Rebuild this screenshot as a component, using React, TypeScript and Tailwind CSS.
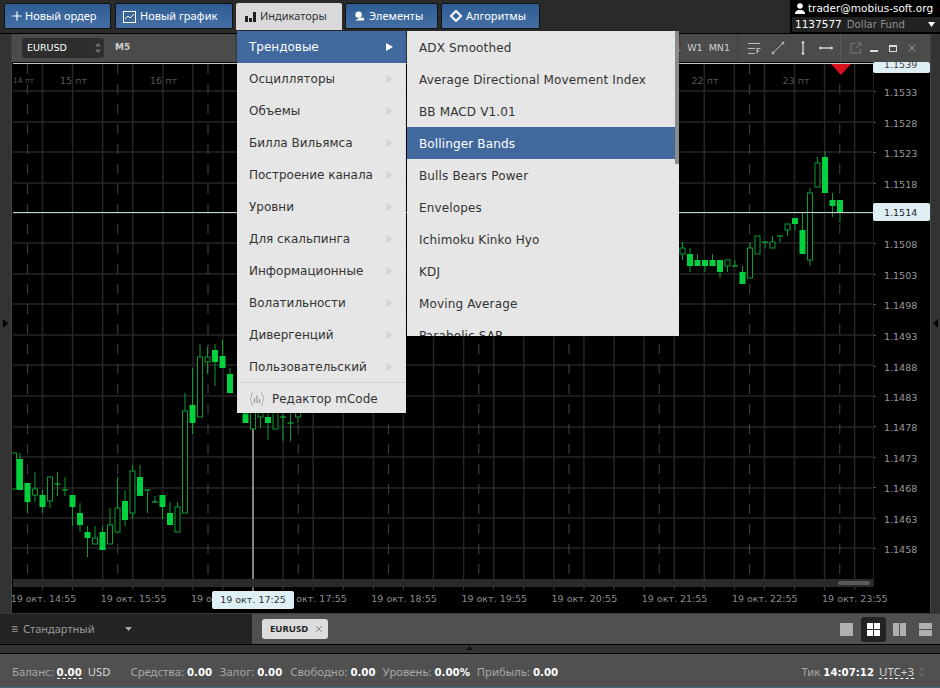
import React from "react";
import { Plus, X } from "lucide-react";

type Candle = [number, number, number, number, number, "f" | "h" | "d"];

// x, high, body top, body bottom, low, kind
const candles: Candle[] = [
    [14, 453, 453, 489, 489, "h"],
    [20, 453, 459, 490, 490, "f"],
    [27.5, 483, 483, 502, 513, "f"],
    [35, 472, 489, 495, 502, "h"],
    [42.5, 490, 495, 507, 513, "f"],
    [50, 477, 477, 501, 508, "h"],
    [57.5, 472, 484, 484, 496, "d"],
    [65, 477, 490, 490, 496, "d"],
    [72.5, 495, 495, 507, 526, "f"],
    [80, 503, 513, 525, 532, "f"],
    [87.5, 526, 532, 538, 557, "f"],
    [95, 526, 538, 544, 544, "h"],
    [102.5, 526, 532, 550, 550, "f"],
    [110, 508, 525, 544, 544, "h"],
    [117.5, 477, 508, 532, 532, "h"],
    [125, 490, 501, 520, 526, "f"],
    [132.5, 465, 471, 513, 519, "h"],
    [140, 465, 477, 496, 496, "f"],
    [147.5, 490, 490, 490, 513, "d"],
    [155, 496, 502, 502, 502, "d"],
    [162.5, 495, 495, 507, 519, "f"],
    [170, 502, 513, 525, 525, "f"],
    [177.5, 502, 507, 532, 532, "h"],
    [185, 393, 411, 513, 513, "h"],
    [192.5, 368, 405, 423, 434, "f"],
    [200, 344, 357, 417, 417, "h"],
    [207.5, 347, 357, 362, 374, "h"],
    [215, 344, 350, 362, 386, "f"],
    [222.5, 340, 356, 368, 368, "f"],
    [230, 368, 374, 393, 393, "f"],
    [245.5, 405, 405, 423, 423, "f"],
    [253, 405, 405, 429, 429, "h"],
    [260.5, 405, 405, 417, 428, "h"],
    [268, 405, 417, 423, 440, "f"],
    [275.5, 405, 405, 429, 429, "h"],
    [283, 405, 417, 417, 441, "d"],
    [290.5, 405, 423, 423, 441, "d"],
    [298, 405, 405, 417, 423, "h"],
    [682.5, 242, 248, 254, 260, "h"],
    [690, 248, 254, 266, 272, "f"],
    [697.5, 254, 260, 266, 266, "f"],
    [705, 260, 260, 266, 272, "f"],
    [712.5, 254, 260, 266, 266, "f"],
    [720, 260, 260, 272, 278, "f"],
    [727.5, 260, 260, 266, 272, "h"],
    [735, 260, 266, 266, 266, "d"],
    [742.5, 266, 272, 284, 284, "f"],
    [750, 242, 248, 278, 278, "h"],
    [757.5, 236, 236, 254, 254, "h"],
    [765, 242, 242, 242, 248, "d"],
    [772.5, 236, 242, 248, 248, "h"],
    [780, 236, 236, 236, 242, "d"],
    [787.5, 224, 224, 230, 236, "h"],
    [795, 218, 218, 224, 230, "f"],
    [802.5, 212, 230, 254, 254, "f"],
    [810, 188, 193, 260, 266, "h"],
    [817.5, 157, 163, 187, 187, "h"],
    [825, 151, 157, 193, 193, "f"],
    [832.5, 193, 200, 206, 217, "f"],
    [840, 200, 200, 212, 223, "f"],
];

const prices = [
    ["1.1533", 92],
    ["1.1528", 123],
    ["1.1523", 153],
    ["1.1518", 184],
    ["1.1508", 244],
    ["1.1503", 275],
    ["1.1498", 305],
    ["1.1493", 336],
    ["1.1488", 367],
    ["1.1483", 397],
    ["1.1478", 427],
    ["1.1473", 458],
    ["1.1468", 488],
    ["1.1463", 519],
    ["1.1458", 549],
] as const;

const times = ["14:55", "15:55", "16:55", "17:55", "18:55", "19:55", "20:55", "21:55", "22:55", "23:55"];
const solid = Array.from({ length: 28 }, (_, i) => 42.5 + i * 30.08);
const dashed = Array.from({ length: 10 }, (_, i) => 27.5 + i * 90.25);

const mainMenu = [
    "Трендовые",
    "Осцилляторы",
    "Объемы",
    "Билла Вильямса",
    "Построение канала",
    "Уровни",
    "Для скальпинга",
    "Информационные",
    "Волатильности",
    "Дивергенций",
    "Пользовательский",
];

const subMenu = [
    "ADX Smoothed",
    "Average Directional Movement Index",
    "BB MACD V1.01",
    "Bollinger Bands",
    "Bulls Bears Power",
    "Envelopes",
    "Ichimoku Kinko Hyo",
    "KDJ",
    "Moving Average",
    "Parabolic SAR",
];

const BlueBtn = ({ className, icon, text }: { className: string; icon: React.ReactNode; text: string }) => (
    <div
        className={`flex items-center h-[26px] border border-[#111] rounded-[2px] bg-gradient-to-b from-[#2e5c92] to-[#446fa5] text-white text-[11px] ${className}`}
    >
        {icon}
        <span>{text}</span>
    </div>
);

const Chart = () => (
    <svg className="block w-full h-full" viewBox="12 62 918 551" fontFamily="'DejaVu Sans', sans-serif">
        <rect x="12" y="62" width="918" height="551" fill="#000" />
        <line x1="13" y1="63.5" x2="873" y2="63.5" stroke="#c9c9c9" />
        {[91, 122, 152, 183, 213, 243, 274, 304, 335, 365, 396, 427, 457, 488, 518, 548].map((y) => (
            <line key={y} x1="13" y1={y} x2="873" y2={y} stroke="#262626" strokeWidth="1.5" />
        ))}
        {solid.map((x) => (
            <line key={x} x1={x} y1="64" x2={x} y2="579" stroke="#262626" strokeWidth="1.5" />
        ))}
        {dashed.map((x) => (
            <line key={x} x1={x} y1="64" x2={x} y2="579" stroke="#3a3a3a" strokeWidth="1.2" strokeDasharray="10 10" />
        ))}
        <text x="13" y="83" fontSize="7.5" fill="#555">
            14 пт
        </text>
        {[
            ["15 пт", 73.5],
            ["16 пт", 163.5],
            ["22 пт", 705],
            ["23 пт", 796],
        ].map(([t, x]) => (
            <text key={t} x={x} y="84" textAnchor="middle" fontSize="9.5" fill="#555">
                {t}
            </text>
        ))}

        {/* crosshair */}
        <line x1="253" y1="413" x2="253" y2="592" stroke="#9aa0a3" strokeWidth="1.6" />

        {candles.map(([x, hi, top, bottom, lo, kind]) => (
            <g key={x}>
                <line x1={x} y1={hi} x2={x} y2={lo} stroke="#0a9c35" />
                {kind === "f" && <rect x={x - 3} y={top} width="6" height={bottom - top} fill="#00d23f" />}
                {kind === "h" && (
                    <rect x={x - 2.5} y={top} width="5" height={bottom - top} fill="#000" stroke="#0a9c35" />
                )}
                {kind === "d" && <line x1={x - 3} y1={top} x2={x + 3} y2={top} stroke="#0fb53d" strokeWidth="1.2" />}
            </g>
        ))}

        <line x1="13" y1="212.5" x2="873" y2="212.5" stroke="#bcd8dd" />
        <polygon points="831,64 851,64 841,75" fill="#d8111c" />

        {/* price axis */}
        {prices.map(([p, y]) => (
            <g key={p}>
                <line x1="873" y1={y - 0.5} x2="876" y2={y - 0.5} stroke="#555" />
                <text x="884" y={y + 3.5} fontSize="9.5" fill="#9a9a9a">
                    {p}
                </text>
            </g>
        ))}
        <line x1="873.5" y1="64" x2="873.5" y2="587" stroke="#222" />

        {/* scrollbar */}
        <rect x="13" y="579" width="860" height="8" fill="#2a2a2a" />
        <rect x="838" y="581" width="32" height="4" rx="2" fill="#5a5a5a" />

        {/* time axis */}
        {solid.map((x) => (
            <line key={x} x1={x} y1="587" x2={x} y2="590" stroke="#444" />
        ))}
        {times.map((t, i) => (
            <text key={t} x={43.5 + i * 90.15} y="602" textAnchor="middle" fontSize="9.5" fill="#8c8c8c">
                19 окт. {t}
            </text>
        ))}

        {/* tags over the axes */}
        <rect x="873" y="62" width="57" height="11" rx="2" fill="#dff0f5" />
        <text x="884" y="68" fontSize="9.5" fill="#444">
            1.1539
        </text>
        <rect x="873" y="203" width="57" height="18" rx="2" fill="#dff0f5" />
        <text x="884" y="215.5" fontSize="9.5" fill="#222">
            1.1514
        </text>
        <rect x="212" y="591" width="82" height="18" rx="2" fill="#dff0f5" />
        <text x="253" y="603" textAnchor="middle" fontSize="9.5" fill="#333">
            19 окт. 17:25
        </text>
    </svg>
);

const Arrow = ({ active }: { active?: boolean }) => (
    <svg width="7" height="8" viewBox="0 0 7 8">
        <polygon points="0,0 7,4 0,8" fill={active ? "#fff" : "#d4d4d4"} />
    </svg>
);

const Menu = () => (
    <div className="absolute left-[237px] top-[31px] flex items-start text-[12px] text-[#333]">
        <div className="w-[169px] bg-[#e6e6e6] shadow-[0_1px_2px_rgba(0,0,0,0.6)]">
            {mainMenu.map((item, i) => (
                <div
                    key={item}
                    className={`flex items-center justify-between h-[32px] pl-3 pr-[13px] ${i === 0 ? "bg-[#41699e] text-white" : ""}`}
                >
                    <span className={i === 0 ? "-mt-px" : ""}>{item}</span>
                    <Arrow active={i === 0} />
                </div>
            ))}
            <div className="flex items-center h-[31px] gap-[7px] pl-3 pt-px border-t border-[#d4d4d4] -mt-[1px]">
                <svg width="16" height="16" viewBox="0 0 16 16" fill="none" stroke="#a5a5a5">
                    <path d="M4 1.500C2 1.500 3 7 1 8c2 1 1 6.500 3 6.500M12 1.500c2 0 1 5.500 3 6.500-2 1-1 6.500-3 6.500" />
                    <path d="M5.500 7v5M8 4.500V12M10.500 8v4" strokeWidth="1.500" />
                </svg>
                <span>Редактор mCode</span>
            </div>
        </div>
        <div className="relative w-[272px] h-[305px] ml-[1px] overflow-hidden bg-[#e6e6e6] tracking-[0.14px] shadow-[0_1px_2px_rgba(0,0,0,0.6)]">
            {subMenu.map((item, i) => (
                <div
                    key={item}
                    className={`flex items-center h-[32px] pl-3 pt-[2px] ${i === 3 ? "bg-[#41699e] text-white" : ""}`}
                >
                    {item}
                </div>
            ))}
            <div className="absolute right-0 top-0 w-[4px] h-[133px] bg-[#8a8a8a]" />
        </div>
    </div>
);

const Toolbar = () => (
    <div className="flex items-center h-[28px] bg-[#4b4b4b] pl-[10px] text-[#cfcfcf]">
        <div className="flex items-center justify-between w-[82px] h-[20px] pl-[5px] pr-[3px] rounded-[3px] bg-[#2e2e2e] text-white text-[9.5px]">
            <span>EURUSD</span>
            <svg width="6" height="12" viewBox="0 0 6 12" fill="#6f6f6f">
                <polygon points="3,1 6,4.500 0,4.500" />
                <polygon points="0,7.500 6,7.500 3,11" />
            </svg>
        </div>
        <span className="ml-[11px] text-[9px] font-bold">M5</span>
        <div className="flex gap-[6px] ml-auto text-[9.5px]">
            <span>D1</span>
            <span>W1</span>
            <span>MN1</span>
        </div>
        <div className="flex items-center w-[104px] h-full ml-[7px] pl-[9px] border-x border-[#3f3f3f] border-r-[#5a5a5a]">
            <svg width="14" height="14" viewBox="0 0 14 14" stroke="#bbb" fill="none">
                <path d="M1 2.500h12M1 7.500h7M1 12.500h7" />
                <path d="M10 12.500V7.500h3.500M10 10h2.500" strokeWidth="1.200" />
            </svg>
            <svg width="14" height="14" viewBox="0 0 14 14" stroke="#bbb" fill="#bbb" className="ml-[10px]">
                <path d="M2 12L12 2" />
                <circle cx="2" cy="12" r="1" />
                <circle cx="12" cy="2" r="1" />
            </svg>
            <svg width="14" height="14" viewBox="0 0 14 14" stroke="#ccc" fill="#ccc" className="ml-[11px]">
                <path d="M7 1v12" strokeWidth="1.500" />
                <circle cx="7" cy="1.500" r="1" />
                <circle cx="7" cy="12.500" r="1" />
            </svg>
            <svg width="14" height="14" viewBox="0 0 14 14" stroke="#ccc" fill="#ccc" className="ml-[9px]">
                <path d="M1 7h12" strokeWidth="1.500" />
                <circle cx="1.500" cy="7" r="1" />
                <circle cx="12.500" cy="7" r="1" />
            </svg>
        </div>
        <div className="flex items-center h-full gap-[8px] pl-[9px] pr-[12px]">
            <svg width="12" height="12" viewBox="0 0 12 12" stroke="#7b7b7b" fill="none">
                <path d="M5 1.500H1v9.500h9.500V7M6 6l5-5M7.500 1h3.500v3.500" />
            </svg>
            <div className="w-[8px] h-[2px] mt-[6px] bg-[#ddd]" />
            <div className="w-[8px] h-[7px] ml-[3px] border border-t-2 border-[#ddd]" />
            <X size={12} color="#9a9a9a" className="ml-[1px]" />
        </div>
    </div>
);

const StatusItem = ({ label, value, className }: { label: string; value: string; className?: string }) => (
    <span className={className}>
        {label} <b className="font-['DejaVu_Sans',sans-serif] text-[10.2px] text-white">{value}</b>
    </span>
);

export default function App() {
    return (
        <div className="relative flex flex-col w-[940px] h-[688px] overflow-hidden bg-[#2a2a2a] font-['Noto_Sans',sans-serif]">
            <header className="flex justify-between h-[34px] border-b border-black">
                <div className="flex items-start gap-[3px] pt-[3px] pl-1">
                    <BlueBtn className="w-[107px] gap-px pl-[5px]" icon={<Plus size={14} strokeWidth={2} />} text="Новый ордер" />
                    <BlueBtn
                        className="w-[118px] ml-px gap-[4px] pl-[7px]"
                        icon={
                            <svg width="13" height="13" viewBox="0 0 13 13" fill="none" stroke="#fff">
                                <rect x="0.500" y="1.500" width="12" height="11" />
                                <path d="M2 9l3-3 2 2 4-4" />
                            </svg>
                        }
                        text="Новый график"
                    />
                    <div className="flex items-center w-[106px] h-[27px] gap-[4px] pl-[9px] rounded-t-[2px] bg-[#d9d9d9] text-[#333] text-[11px]">
                        <svg width="11" height="11" viewBox="0 0 11 11" fill="#222">
                            <rect x="0" y="5" width="3" height="6" />
                            <rect x="4" y="7" width="3" height="4" />
                            <rect x="8" y="1" width="3" height="10" />
                        </svg>
                        <span>Индикаторы</span>
                    </div>
                    <BlueBtn
                        className="w-[93px] gap-[4px] pl-[8px]"
                        icon={
                            <svg width="11" height="12" viewBox="0 0 12 12" fill="#fff">
                                <circle cx="5" cy="4.500" r="3.500" />
                                <path d="M2 10.500 L6 8 L11 8 L11 11 L2 11z" />
                            </svg>
                        }
                        text="Элементы"
                    />
                    <BlueBtn
                        className="w-[99px] gap-[4px] pl-[8px]"
                        icon={
                            <svg width="12" height="12" viewBox="0 0 12 12" fill="none" stroke="#fff" strokeWidth="2">
                                <polygon points="6,1 11,6 6,11 1,6" />
                            </svg>
                        }
                        text="Алгоритмы"
                    />
                </div>
                <div className="flex flex-col w-[150px] h-[33px] bg-black font-['DejaVu_Sans',sans-serif]">
                    <div className="flex items-center h-[17px] gap-[3px] pl-[5px] text-[10.5px] text-white">
                        <svg width="10" height="11" viewBox="0 0 10 11" fill="#fff">
                            <circle cx="5" cy="3" r="2.800" />
                            <path d="M0 11c0-3 2-4 5-4s5 1 5 4z" />
                        </svg>
                        <span>trader@mobius-soft.org</span>
                    </div>
                    <div className="flex items-center h-[15px] ml-[2px] pl-[3px] pr-[3px] bg-[#222] text-[10.5px]">
                        <span className="text-white">1137577</span>
                        <span className="ml-[5px] text-[10.2px] text-[#8f8f8f]">Dollar Fund</span>
                        <svg width="7" height="5" viewBox="0 0 7 5" className="ml-auto mr-[2px]">
                            <polygon points="0,0 7,0 3.500,5" fill="#fff" />
                        </svg>
                    </div>
                </div>
            </header>

            <div className="flex h-[579px] font-['DejaVu_Sans',sans-serif]">
                <div className="flex items-center justify-start w-3 bg-[#333] border-r border-[#444] pl-[3px]">
                    <svg width="5" height="9" viewBox="0 0 5 9">
                        <polygon points="0,0 5,4.500 0,9" fill="#000" />
                    </svg>
                </div>
                <div className="flex flex-col flex-1">
                    <Toolbar />
                    <div className="flex-1 min-h-0">
                        <Chart />
                    </div>
                </div>
                <div className="flex items-center justify-end w-[10px] bg-[#333] border-l border-[#444] pr-[2px]">
                    <svg width="5" height="9" viewBox="0 0 5 9">
                        <polygon points="5,0 0,4.500 5,9" fill="#000" />
                    </svg>
                </div>
            </div>

            <div className="flex h-[31px] border-t border-[#3a3a3a]">
                <div className="flex items-center w-[252px] bg-[#232323] pl-[11px] text-[11px] text-[#999]">
                    <span className="mr-[5px] text-[12px]">≡</span>
                    <span>Стандартный</span>
                    <svg width="7" height="4" viewBox="0 0 7 4" className="ml-[31px]">
                        <polygon points="0,0 7,0 3.500,4" fill="#aaa" />
                    </svg>
                </div>
                <div className="flex items-center flex-1 bg-[#505050] pl-[10px] pr-[8px]">
                    <div className="flex items-center justify-between w-[66px] h-[20px] pl-2 pr-[4px] rounded-[3px] bg-[#dcdcdc] text-[9.5px] font-bold text-[#222]">
                        <span>EURUSD</span>
                        <X size={10} color="#777" />
                    </div>
                    <div className="flex items-center gap-[7px] ml-auto">
                        <div className="w-[13px] h-[13px] mr-px bg-[#b0b0b0]" />
                        <div className="flex items-center justify-center w-[25px] h-[25px] rounded-[3px] bg-[#222]">
                            <div className="grid grid-cols-2 gap-[1px] w-[13px] h-[13px]">
                                <div className="bg-white" />
                                <div className="bg-white" />
                                <div className="bg-white" />
                                <div className="bg-white" />
                            </div>
                        </div>
                        <div className="grid grid-cols-2 gap-[1px] w-[13px] h-[13px]">
                            <div className="bg-[#b0b0b0]" />
                            <div className="bg-[#b0b0b0]" />
                        </div>
                        <div className="grid grid-rows-2 gap-[1px] w-[13px] h-[13px] ml-[6px]">
                            <div className="bg-[#b0b0b0]" />
                            <div className="bg-[#b0b0b0]" />
                        </div>
                    </div>
                </div>
            </div>

            <div className="flex justify-center h-[10px] border-y border-black bg-[#333]">
                <svg width="7" height="4" viewBox="0 0 7 4" className="mt-[1px] -ml-[1px]">
                    <polygon points="3.500,0 7,4 0,4" fill="#111" />
                </svg>
            </div>

            <footer className="flex items-center flex-1 bg-[#505050] pl-3 pt-[3px] pr-[16px] text-[11.3px] text-[#a8a8a8] border-b border-[#3d6d86]">
                <span>
                    Баланс:{" "}
                    <b className="font-['DejaVu_Sans',sans-serif] text-[10.2px] text-white border-b border-dashed border-white">0.00</b>{" "}
                    <span className="ml-[3px] text-[#d5d5d5]">USD</span>
                </span>
                <StatusItem className="ml-[20px]" label="Средства:" value="0.00" />
                <StatusItem className="ml-[8px]" label="Залог:" value="0.00" />
                <StatusItem className="ml-[8px]" label="Свободно:" value="0.00" />
                <StatusItem className="ml-[7px]" label="Уровень:" value="0.00%" />
                <StatusItem className="ml-[7px]" label="Прибыль:" value="0.00" />
                <StatusItem className="ml-auto" label="Тик" value="14:07:12" />
                <span className="ml-[5px] text-[11.5px] text-[#d5d5d5] border-b border-dashed border-white leading-[13px]">UTC+3</span>
                <svg width="5" height="10" viewBox="0 0 5 10" className="ml-[5px]" fill="#666">
                    <polygon points="2.500,0 5,3.500 0,3.500" />
                    <polygon points="0,6.500 5,6.500 2.500,10" />
                </svg>
            </footer>

            <div className="font-['DejaVu_Sans',sans-serif]">
                <Menu />
            </div>
        </div>
    );
}
